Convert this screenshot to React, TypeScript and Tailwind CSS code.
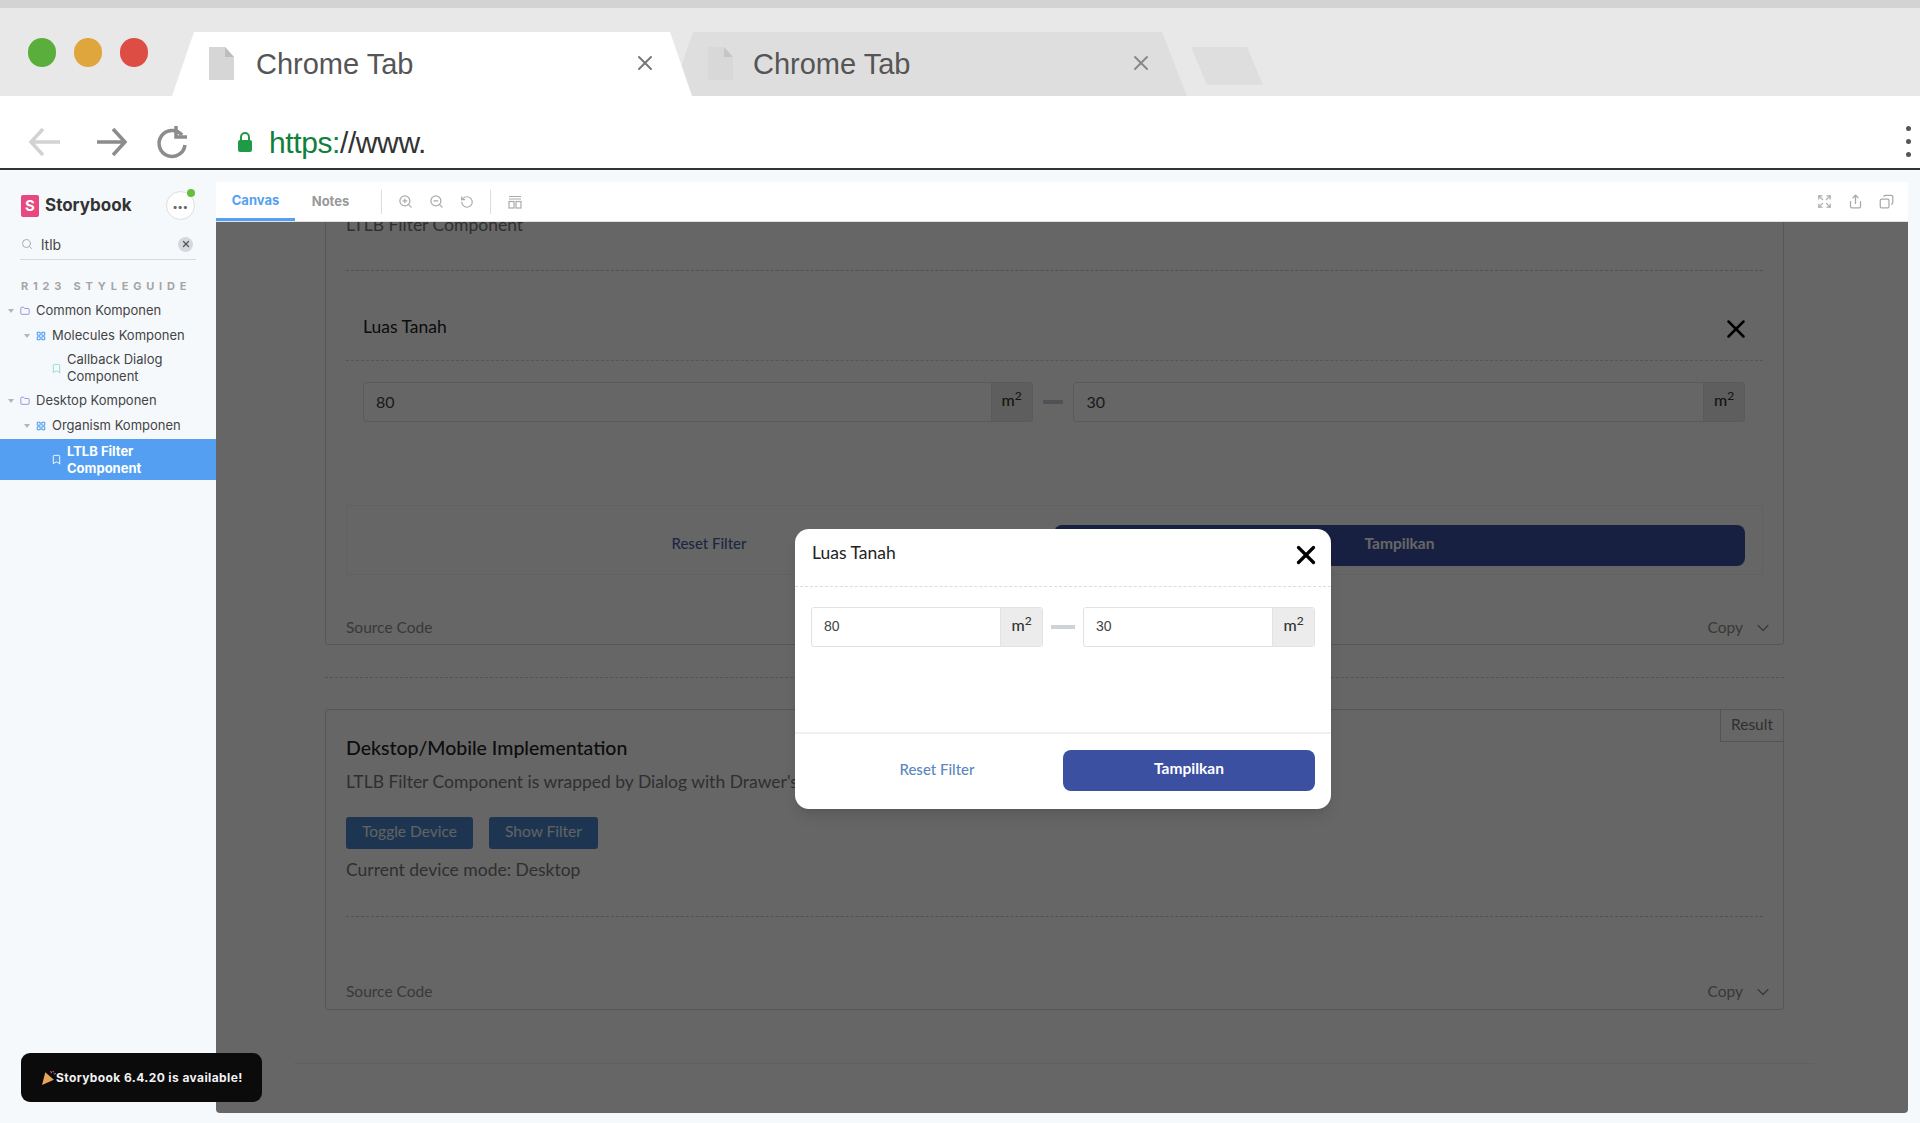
import { ChevronDown, Copy, Expand, RotateCw, Share, X, ZoomIn, ZoomOut, Search, Folder, Bookmark, LayoutGrid } from "lucide-react";

const SANS = "font-['Lato',sans-serif]";

function DocIcon({ className }: { className: string }) {
  return (
    <svg viewBox="0 0 25 33" className={className}>
      <path d="M0 0H16L25 10V33H0Z" fill="#d6d6d6" />
      <path d="M16 0L25 10H16Z" fill="#bdbdbd" />
    </svg>
  );
}

function BrowserChrome() {
  return (
    <header className="flex h-[170px] shrink-0 flex-col font-['Liberation_Sans',sans-serif]">
      <div className="h-[8px] bg-[#d3d3d3]" />
      <div className="relative flex h-[88px] items-end bg-[#e8e8e8] pl-[172px]">
        <div className="absolute left-[28px] top-[30px] flex gap-[18px]">
          <span className="h-[29px] w-[28px] rounded-full bg-[#5aaf3c]" />
          <span className="h-[29px] w-[28px] rounded-full bg-[#dfa63d]" />
          <span className="h-[29px] w-[28px] rounded-full bg-[#dd4d44]" />
        </div>
        <div className="z-10 flex h-[64px] w-[520px] items-center bg-white pl-[37px] [clip-path:polygon(22px_0,498px_0,520px_100%,0_100%)]">
          <DocIcon className="mt-[-2px] h-[33px] w-[25px]" />
          <span className="ml-[22px] text-[29px] leading-none text-[#555]">Chrome Tab</span>
          <X className="ml-[220px] mt-[-2px] h-[24px] w-[24px] text-[#777]" strokeWidth={2} />
        </div>
        <div className="ml-[-21px] flex h-[64px] w-[516px] items-center bg-[#dedede] pl-[37px] [clip-path:polygon(22px_0,491px_0,516px_100%,0_100%)]">
          <DocIcon className="mt-[-2px] h-[33px] w-[25px] opacity-70" />
          <span className="ml-[20px] text-[29px] leading-none text-[#555]">Chrome Tab</span>
          <X className="ml-[219px] mt-[-2px] h-[24px] w-[24px] text-[#888]" strokeWidth={2} />
        </div>
        <div className="mb-[11px] ml-[4px] h-[38px] w-[72px] bg-[#dedede] [clip-path:polygon(0_0,56px_0,72px_100%,16px_100%)]" />
      </div>
      <div className="relative flex h-[72px] items-center bg-white pt-[20px]">
        <svg viewBox="0 0 160 40" className="ml-[28px] h-[40px] w-[160px]" fill="none" strokeWidth="3.5">
          <path d="M32 20H4M15 7L3 20L15 33" stroke="#d2d2d2" />
          <path d="M69 20H97M85 7L97 20L85 33" stroke="#8c8c8c" />
          <path d="M154 13A13 13 0 1 0 157 23" stroke="#8c8c8c" />
          <path d="M148 4V15H159" stroke="#8c8c8c" />
        </svg>
        <svg viewBox="0 0 16 22" className="ml-[49px] h-[22px] w-[16px]">
          <path d="M4 9V6A4 4 0 0 1 12 6V9" fill="none" stroke="#1f9a46" strokeWidth="2" />
          <rect x="1" y="9" width="14" height="12" rx="2" fill="#1f9a46" />
        </svg>
        <span className="ml-[16px] text-[30px] tracking-[-0.4px] text-[#333]">
          <span className="text-[#12803c]">https:</span>//www.
        </span>
        <div className="absolute right-[9px] top-[30px] flex flex-col gap-[8px]">
          <span className="h-[5px] w-[5px] rounded-full bg-[#555]" />
          <span className="h-[5px] w-[5px] rounded-full bg-[#555]" />
          <span className="h-[5px] w-[5px] rounded-full bg-[#555]" />
        </div>
      </div>
      <div className="h-[2px] bg-[#333]" />
    </header>
  );
}

function TreeRow({ label, indent, kind }: { label: string; indent: string; kind: "folder" | "grid" }) {
  return (
    <div className={`flex h-[25px] items-center ${indent}`}>
      <span className="mr-[6px] h-0 w-0 border-x-[3px] border-t-[4px] border-x-transparent border-t-[#b5b5b5]" />
      {kind === "folder" ? (
        <Folder className="mr-[6px] h-[10px] w-[10px] text-[#8e7fd6]" strokeWidth={2} />
      ) : (
        <LayoutGrid className="mr-[6px] h-[10px] w-[10px] text-[#4d9df0]" strokeWidth={2.5} />
      )}
      <span>{label}</span>
    </div>
  );
}

function Sidebar() {
  return (
    <aside className="w-[216px] shrink-0 pt-[21px] font-['Inter',sans-serif] text-[13px] text-[#444]">
      <div className="flex items-center justify-between pl-[21px] pr-[21px]">
        <div className="flex items-center">
          <span className="flex h-[22px] w-[18px] items-center justify-center rounded-[2px] bg-[#e7487f] text-[15px] font-bold leading-none text-white">
            S
          </span>
          <span className="ml-[6px] text-[17px] font-bold text-[#333]">Storybook</span>
        </div>
        <div className="relative flex h-[29px] w-[29px] items-center justify-center rounded-full border border-[#ddd] bg-white text-[10px] font-bold leading-none tracking-[0.5px] text-[#666]">
          •••
          <span className="absolute right-[-1px] top-[-3px] h-[8px] w-[8px] rounded-full bg-[#66bf3c]" />
        </div>
      </div>
      <div className="mx-[20px] mt-[11px] flex h-[29px] items-center border-b border-[#d5d8dc] pb-[2px]">
        <Search className="ml-[1px] h-[12px] w-[12px] text-[#aaa]" />
        <span className="ml-[8px] text-[14px] text-[#444]">ltlb</span>
        <span className="ml-auto mr-[3px] flex h-[15px] w-[15px] items-center justify-center rounded-full bg-[#d5d8dc]">
          <X className="h-[10px] w-[10px] text-[#555]" strokeWidth={3} />
        </span>
      </div>
      <div className="ml-[21px] mt-[21px] text-[11px] font-bold leading-none tracking-[4.8px] text-[#a5a5a5]">R123 STYLEGUIDE</div>
      <div className="mt-[6px]">
        <TreeRow label="Common Komponen" indent="pl-[8px]" kind="folder" />
        <TreeRow label="Molecules Komponen" indent="pl-[24px]" kind="grid" />
        <div className="flex h-[40px] items-center pl-[51px] leading-[17px]">
          <Bookmark className="mr-[5px] h-[11px] w-[11px] shrink-0 text-[#8fd8d0]" strokeWidth={2} />
          <span>Callback Dialog Component</span>
        </div>
        <TreeRow label="Desktop Komponen" indent="pl-[8px]" kind="folder" />
        <TreeRow label="Organism Komponen" indent="pl-[24px]" kind="grid" />
        <div className="mt-[1px] flex h-[41px] items-center bg-[#559ff2] pl-[51px] font-bold leading-[17px] text-white">
          <Bookmark className="mr-[5px] h-[11px] w-[11px] shrink-0" strokeWidth={2} />
          <span className="max-w-[100px]">LTLB Filter Component</span>
        </div>
      </div>
    </aside>
  );
}

function AreaInput({ value, unitBox, size, textSize }: { value: string; unitBox: string; size: string; textSize: string }) {
  return (
    <div className={`flex h-[40px] overflow-hidden rounded-[3px] border border-[#e2e2e2] bg-white ${size}`}>
      <span className={`flex flex-1 items-center pl-[12px] text-[#444] ${textSize}`}>{value}</span>
      <span className={`flex items-center justify-center border-l border-[#e2e2e2] bg-[#ececec] font-medium text-[#333] ${unitBox}`}>
        <span className="mt-[-4px] text-[16px] leading-none">
          m<sup className="text-[12px] leading-none">2</sup>
        </span>
      </span>
    </div>
  );
}

function SourceRow() {
  return (
    <div className="flex h-[24px] items-center justify-between pl-[20px] pr-[10px] text-[15.5px] text-[#8e8e8e]">
      <span>Source Code</span>
      <span className="flex items-center">
        Copy
        <ChevronDown className="ml-[10px] h-[20px] w-[20px]" strokeWidth={1.5} />
      </span>
    </div>
  );
}

function PreviewDocs() {
  return (
    <div className={`ml-[78px] mt-[-60px] w-[1521px] border-b border-[#f0f0f0] px-[31px] pb-[53px] pt-[20px] ${SANS}`}>
      <section className="rounded-[3px] border border-[#d8d8d8] pt-[30px]">
        <div className="mx-[20px]">
          <p className="h-[24px] text-[17.5px] leading-[24px] text-[#777]">LTLB Filter Component</p>
          <div className="mt-[33px] border-b border-dashed border-[#c8c8c8]" />
          <div className="flex h-[90px] items-center justify-between border-b border-dashed border-[#d5d5d5] pl-[17px] pt-[24px]">
            <span className="text-[17.5px] text-[#222]">Luas Tanah</span>
            <X className="mr-[12px] mt-[2px] h-[30px] w-[30px] text-black" strokeWidth={2} />
          </div>
          <div className="mt-[21px] flex items-center pl-[17px] pr-[18px]">
            <AreaInput value="80" unitBox="w-[41px]" size="w-[671px]" textSize="text-[16px]" />
            <span className="mx-[10px] h-[4px] w-[21px] bg-[#c8cad2]" />
            <AreaInput value="30" unitBox="w-[41px]" size="w-[673px]" textSize="text-[16px]" />
          </div>
          <div className="mt-[83px] flex h-[70px] border border-[#f2f2f2] pl-[17px] pr-[17px] pt-[19px]">
            <div className="flex h-[41px] flex-1 items-center justify-center pb-[4px] text-[15px] font-medium text-[#4a5fa8]">Reset Filter</div>
            <div className="flex h-[41px] w-[691px] items-center justify-center rounded-[8px] bg-[#3b50a0] pb-[4px] text-[15.5px] font-bold text-white">
              Tampilkan
            </div>
          </div>
        </div>
        <div className="mb-[4px] mt-[41px]">
          <SourceRow />
        </div>
      </section>
      <div className="my-[32px] border-b border-dashed border-[#d0d0d0]" />
      <section className="relative mt-[-1px] h-[301px] rounded-[3px] border border-[#d8d8d8] pt-[26px]">
        <span className="absolute right-0 top-0 flex h-[32px] w-[63px] items-center justify-center border-b border-l border-[#d0d0d0] pb-[2px] text-[15.5px] text-[#777]">
          Result
        </span>
        <div className="mx-[20px]">
          <h2 className="text-[19.5px] font-medium leading-[24px] text-[#222]">Dekstop/Mobile Implementation</h2>
          <p className="mt-[11px] text-[17.5px] leading-[22px] text-[#777]">LTLB Filter Component is wrapped by Dialog with Drawer's</p>
          <div className="mt-[24px] flex gap-[16px]">
            <button className="flex h-[32px] w-[127px] items-center justify-center rounded-[3px] bg-[#4a86c8] pb-[3px] text-[15.5px] text-[#f0f6fb]">
              Toggle Device
            </button>
            <button className="flex h-[32px] w-[109px] items-center justify-center rounded-[3px] bg-[#4a86c8] pb-[3px] text-[15.5px] text-[#f0f6fb]">
              Show Filter
            </button>
          </div>
          <p className="mt-[10px] text-[17.5px] leading-[22px] text-[#777]">Current device mode: Desktop</p>
          <div className="mt-[35px] border-b border-dashed border-[#c8c8c8]" />
        </div>
        <div className="mt-[63px]">
          <SourceRow />
        </div>
      </section>
    </div>
  );
}

function FilterDialog() {
  return (
    <div className={`h-[280px] w-[536px] rounded-[14px] bg-white shadow-lg ${SANS}`}>
      <div className="flex h-[58px] items-center justify-between border-b border-dashed border-[#dcdcdc] pb-[7px] pl-[17px] pr-[10px]">
        <span className="text-[17.5px] text-[#222]">Luas Tanah</span>
        <X className="mt-[2px] h-[30px] w-[30px] text-black" strokeWidth={2.6} />
      </div>
      <div className="flex h-[147px] items-start border-b-2 border-[#f0f0f0] px-[16px] pt-[20px]">
        <AreaInput value="80" unitBox="w-[42px]" size="w-[232px]" textSize="font-['Liberation_Sans',sans-serif] text-[14px]" />
        <span className="mx-[8px] mt-[18px] h-[4px] w-[24px] bg-[#d0d2da]" />
        <AreaInput value="30" unitBox="w-[42px]" size="w-[232px]" textSize="font-['Liberation_Sans',sans-serif] text-[14px]" />
      </div>
      <div className="flex px-[16px] pt-[16px]">
        <div className="flex h-[41px] flex-1 items-center justify-center pb-[2px] text-[15px] font-medium text-[#5b87bd]">Reset Filter</div>
        <div className="flex h-[41px] w-[252px] items-center justify-center rounded-[8px] bg-[#3b50a0] pb-[2px] text-[15.5px] font-bold text-white">
          Tampilkan
        </div>
      </div>
    </div>
  );
}

function Toolbar() {
  return (
    <div className="flex h-[40px] shrink-0 items-center border-b border-[#e3e3e3] bg-white font-['Inter',sans-serif] text-[13px] font-bold text-[#999]">
      <span className="flex h-full w-[79px] items-center justify-center border-b-[3px] border-[#559ff2] pt-[2px] text-[#559ff2]">Canvas</span>
      <span className="ml-[15px] flex w-[41px] justify-center">Notes</span>
      <span className="ml-[30px] h-[24px] w-px bg-[#ddd]" />
      <ZoomIn className="ml-[16px] h-[15px] w-[15px] text-[#aaa]" />
      <ZoomOut className="ml-[16px] h-[15px] w-[15px] text-[#aaa]" />
      <RotateCw className="ml-[16px] h-[14px] w-[14px] -scale-x-100 text-[#aaa]" />
      <span className="ml-[16px] h-[24px] w-px bg-[#ddd]" />
      <svg viewBox="0 0 14 14" className="ml-[17px] h-[14px] w-[14px]" fill="none" stroke="#aaa" strokeWidth="1.2">
        <path d="M1 1.5H13M1 4H13" />
        <rect x="1" y="6.5" width="5" height="6.5" />
        <rect x="8" y="6.5" width="5" height="6.5" />
      </svg>
      <div className="ml-auto flex gap-[16px] pr-[14px]">
        <Expand className="h-[15px] w-[15px] text-[#aaa]" />
        <Share className="h-[15px] w-[15px] text-[#aaa]" />
        <Copy className="h-[15px] w-[15px] -scale-x-100 text-[#aaa]" />
      </div>
    </div>
  );
}

export default function App() {
  return (
    <div className="relative flex h-[1123px] w-[1920px] flex-col overflow-hidden bg-[#f6f9fc]">
      <BrowserChrome />
      <div className="flex min-h-0 flex-1">
        <Sidebar />
        <main className="flex min-w-0 flex-1 flex-col pb-[10px] pr-[12px] pt-[12px]">
          <Toolbar />
          <div className="relative min-h-0 flex-1 overflow-hidden rounded-b-[4px] bg-white">
            <PreviewDocs />
            <div className="absolute inset-0 flex items-center justify-center bg-black/60 pl-[2px] pt-[2px]">
              <FilterDialog />
            </div>
          </div>
        </main>
      </div>
      <div className="absolute left-[21px] top-[1053px] flex h-[49px] w-[241px] items-center rounded-[9px] bg-[#0b0b0c] pl-[20px] font-['Inter',sans-serif] text-[12px] font-bold tracking-[0.4px] text-[#f2f2f2]">
        <svg viewBox="0 0 14 14" className="h-[15px] w-[15px] shrink-0">
          <path d="M4 2L12 9L1 14Z" fill="#e8a45a" />
          <path d="M9 1L10 3M12 4L14 3M11 1L12 2" stroke="#e0577a" strokeWidth="1" />
        </svg>
        <span>Storybook 6.4.20 is available!</span>
      </div>
    </div>
  );
}
